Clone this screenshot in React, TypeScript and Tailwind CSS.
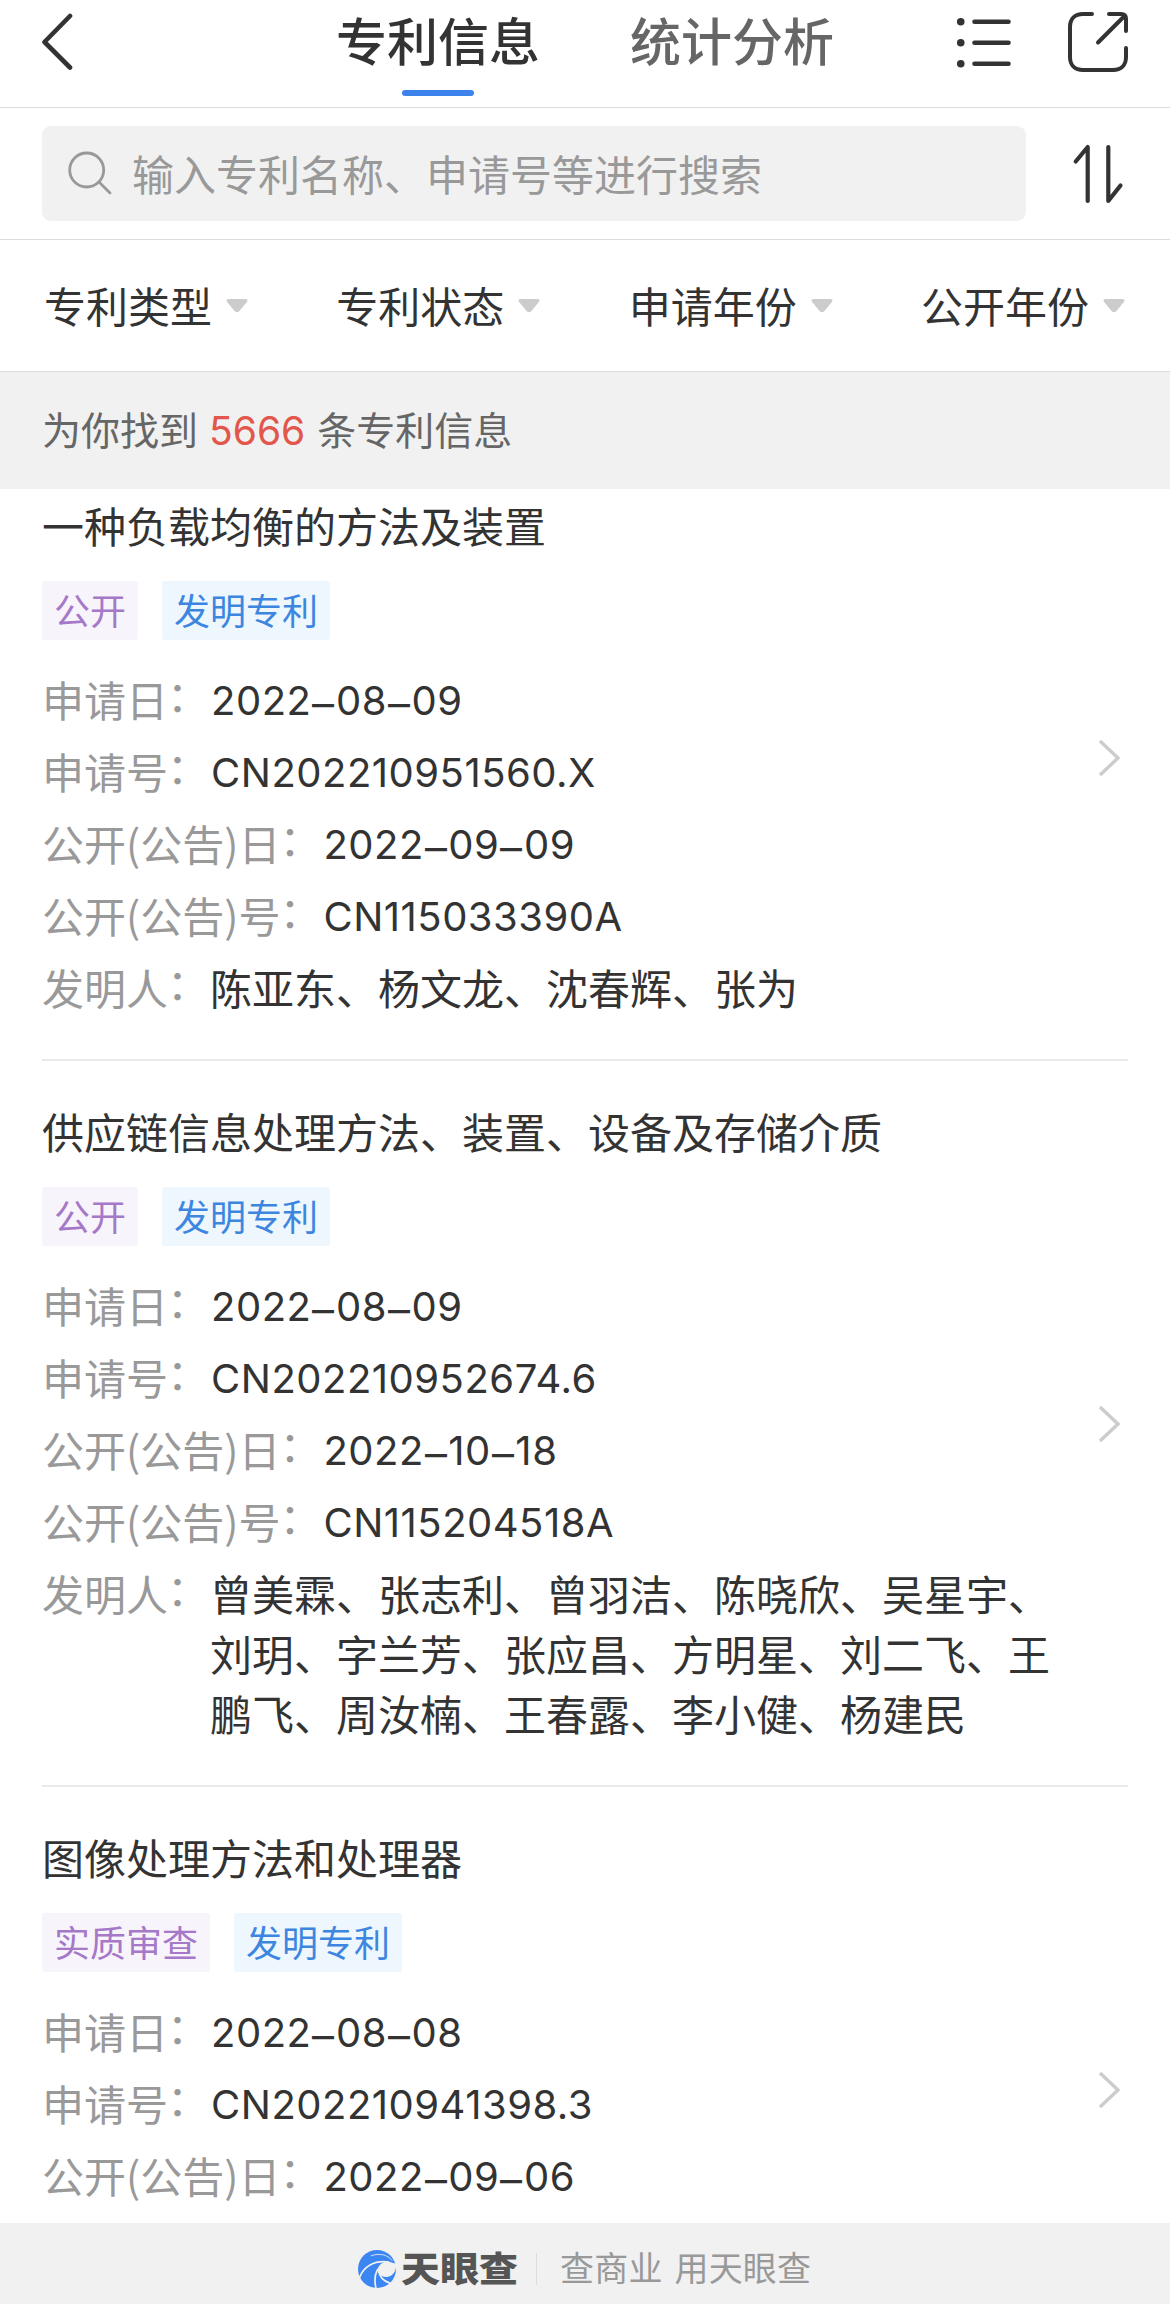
import { ReactNode } from "react";

interface Patent {
  title: string;
  status: string;
  kind: string;
  fields: { label: string; value: string; cjk?: boolean }[];
}

const FILTERS = ["专利类型", "专利状态", "申请年份", "公开年份"];

const PATENTS: Patent[] = [
  {
    title: "一种负载均衡的方法及装置",
    status: "公开",
    kind: "发明专利",
    fields: [
      { label: "申请日", value: "2022–08–09" },
      { label: "申请号", value: "CN202210951560.X" },
      { label: "公开(公告)日", value: "2022–09–09" },
      { label: "公开(公告)号", value: "CN115033390A" },
      { label: "发明人", value: "陈亚东、杨文龙、沈春辉、张为", cjk: true },
    ],
  },
  {
    title: "供应链信息处理方法、装置、设备及存储介质",
    status: "公开",
    kind: "发明专利",
    fields: [
      { label: "申请日", value: "2022–08–09" },
      { label: "申请号", value: "CN202210952674.6" },
      { label: "公开(公告)日", value: "2022–10–18" },
      { label: "公开(公告)号", value: "CN115204518A" },
      {
        label: "发明人",
        value:
          "曾美霖、张志利、曾羽洁、陈晓欣、吴星宇、刘玥、字兰芳、张应昌、方明星、刘二飞、王鹏飞、周汝楠、王春露、李小健、杨建民",
        cjk: true,
      },
    ],
  },
  {
    title: "图像处理方法和处理器",
    status: "实质审查",
    kind: "发明专利",
    fields: [
      { label: "申请日", value: "2022–08–08" },
      { label: "申请号", value: "CN202210941398.3" },
      { label: "公开(公告)日", value: "2022–09–06" },
    ],
  },
];

function Header() {
  return (
    <header className="flex h-[108px] shrink-0 items-start border-b border-[#dcdcdc] text-[51px] leading-[60px] font-medium">
      <svg className="mt-[13px] ml-[38px] h-[60px] w-[40px]" viewBox="0 0 40 60" fill="none" stroke="#333" strokeWidth="4.6" strokeLinecap="round" strokeLinejoin="round">
        <path d="M32 3 6.500 29 32 54.500" />
      </svg>
      <div className="ml-[258px] flex flex-col items-center pt-[9px] text-[#333]">
        <span>专利信息</span>
        <span className="mt-[21px] h-[6px] w-[72px] rounded-full bg-[#3c83ee]" />
      </div>
      <span className="ml-[90px] pt-[9px] text-[#666]">统计分析</span>
      <svg className="mt-[12px] ml-[118px] h-[62px] w-[62px]" viewBox="0 0 62 62" fill="none" stroke="#333" strokeWidth="4.6" strokeLinecap="round">
        <path d="M22.500 9.700h34M22.500 30.700h34M22.500 51.700h34" />
        <path d="M8.700 9.700h.1M8.700 30.700h.1M8.700 51.700h.1" strokeWidth="7.500" />
      </svg>
      <svg className="mt-[10px] ml-[52px] h-[64px] w-[64px]" viewBox="0 0 64 64" fill="none" stroke="#333" strokeWidth="4" strokeLinecap="round" strokeLinejoin="round">
        <path d="M26 4H17C9 4 4 9 4 17v30c0 8 5 13 13 13h30c8 0 13-5 13-13v-9" />
        <path d="M43 4h12q5 0 5 5v12M58.500 6 32 32.500" />
      </svg>
    </header>
  );
}

function SearchBar() {
  return (
    <div className="flex h-[132px] shrink-0 items-center border-b border-[#dcdcdc] pl-[42px]">
      <div className="flex h-[95px] w-[984px] items-center rounded-[9px] bg-[#f1f1f1] pl-[25px] text-[42px] leading-[60px] text-[#999]">
        <svg className="h-[48px] w-[46px]" viewBox="0 0 46 48" fill="none" stroke="#999" strokeWidth="2.800" strokeLinecap="round">
          <circle cx="19.700" cy="20" r="17" />
          <path d="m32 32 11 11" />
        </svg>
        <span className="-mt-[2px] ml-[19px]">输入专利名称、申请号等进行搜索</span>
      </div>
      <svg className="ml-[46px] h-[62px] w-[54px]" viewBox="0 0 54 62" fill="none" stroke="#333" strokeWidth="4.200" strokeLinecap="round" strokeLinejoin="round">
        <path d="M3.700 18.500 15.700 4v54M36.300 4v54L48.500 42.500" />
      </svg>
    </div>
  );
}

function FilterBar() {
  return (
    <div className="flex h-[132px] shrink-0 items-center justify-between border-b border-[#dcdcdc] pr-[45px] pl-[44px] text-[42px] leading-[60px] text-[#333]">
      {FILTERS.map((name) => (
        <div key={name} className="flex items-center gap-[14px]">
          <span className="-mt-[2px]">{name}</span>
          <svg className="h-[16px] w-[22px]" viewBox="0 0 22 16" fill="#ccc">
            <path d="M2.500 1h17c2 0 2.500 1.600 1.400 3l-7.500 9c-1.300 1.700-3.500 1.700-4.800 0L1.100 4C0 2.600.5 1 2.500 1Z" />
          </svg>
        </div>
      ))}
    </div>
  );
}

function Tag({ className, children }: { className: string; children: ReactNode }) {
  return <span className={`rounded-[3px] px-[12px] pb-[2px] text-[36px] leading-[57px] ${className}`}>{children}</span>;
}

// dates are set with a wider dash than the font's own
function LatinValue({ value }: { value: string }) {
  const parts = value.split("–");
  return (
    <dd className="pl-px font-['Inter'] text-[40px] tracking-[0.5px] text-[#333]">
      {parts.map((part, i) => (
        <span key={i}>
          {i > 0 && <span className="mx-[2px] inline-block translate-y-[3px] scale-x-110">–</span>}
          {part}
        </span>
      ))}
    </dd>
  );
}

function PatentCard({ patent }: { patent: Patent }) {
  return (
    <article className="flex min-h-[606px] items-center justify-between border-b-2 border-[#e9e9e9]">
      <div className="self-stretch pt-[40px] pb-[40px]">
        <h2 className="text-[42px] leading-[60px] text-[#333]">{patent.title}</h2>
        <div className="mt-[26px] flex gap-[24px]">
          <Tag className="bg-[#f7f4fb] text-[#a578c8]">{patent.status}</Tag>
          <Tag className="bg-[#eef6fe] text-[#3d86e0]">{patent.kind}</Tag>
        </div>
        <dl className="mt-[31px] flex flex-col gap-[12px] text-[42px] leading-[60px]">
          {patent.fields.map((field) => (
            <div key={field.label} className="flex">
              <dt className="-mt-[2px] mb-[2px] shrink-0 text-[#999]">
                {field.label}
                <span className="inline-block -translate-x-px -translate-y-[5px]">：</span>
              </dt>
              {field.cjk ? (
                <dd className="-mt-[2px] mb-[2px] max-w-[842px] text-[#333]">{field.value}</dd>
              ) : (
                <LatinValue value={field.value} />
              )}
            </div>
          ))}
        </dl>
      </div>
      <svg className="mt-[2px] mr-[6px] h-[40px] w-[24px] shrink-0" viewBox="0 0 24 40" fill="none" stroke="#ccc" strokeWidth="3.400">
        <path d="m2 3 18 17L2 37" />
      </svg>
    </article>
  );
}

function Footer() {
  return (
    <footer className="flex h-[81px] shrink-0 items-center bg-[#f1f1f1] pt-[10px] pl-[357px]">
      <svg className="h-[40px] w-[40px]" viewBox="-3 -3 120 120" fill="none" stroke="#f1f1f1" strokeLinecap="round">
        <circle cx="57" cy="57" r="57" fill="#3b86f0" stroke="none" />
        <path d="M60 62C60 44 76 33 92 35c12 2 14 6 24 5-2 14-3 26-14 35-12 8-26 8-34 1-5-4-8-8-8-14Z" fill="#f1f1f1" stroke="none" />
        <path d="M4 84C16 50 48 30 92 36" strokeWidth="5" />
        <path d="M54 115C46 82 54 54 80 38" strokeWidth="5" />
        <path d="M97 100C78 94 64 82 62 62" strokeWidth="5" />
        <path d="M40 17c24-8 48-4 62 14" strokeWidth="2.500" />
      </svg>
      <span className="ml-[4px] -mt-[4px] scale-y-90 text-[39px] leading-[60px] font-black text-[#555]">天眼查</span>
      <span className="ml-[18px] h-[32px] w-px bg-[#ddd]" />
      <span className="ml-[23px] -mt-[3px] text-[34px] leading-[60px] tracking-[0.2px] whitespace-pre [word-spacing:4px] text-[#999]">
        查商业 用天眼查
      </span>
    </footer>
  );
}

export default function App() {
  return (
    <div lang="zh-CN" className="flex h-[2304px] w-[1170px] flex-col overflow-hidden bg-white font-['Noto_Sans_CJK_SC',sans-serif]">
      <Header />
      <SearchBar />
      <FilterBar />
      <div className="flex h-[117px] shrink-0 items-center bg-[#f1f1f1] pl-[42px] text-[39px] leading-[60px] text-[#666]">
        <span className="-mt-[5px]">为你找到</span>
        <span className="mr-[12px] ml-[11px] font-['Inter'] text-[#e2564b]">5666</span>
        <span className="-mt-[5px]">条专利信息</span>
      </div>
      <main className="min-h-0 flex-1 overflow-hidden px-[42px]">
        {/* list is scrolled slightly past the first card's top padding */}
        <div className="-mt-[34px]">
          {PATENTS.map((patent) => (
            <PatentCard key={patent.title} patent={patent} />
          ))}
        </div>
      </main>
      <Footer />
    </div>
  );
}
